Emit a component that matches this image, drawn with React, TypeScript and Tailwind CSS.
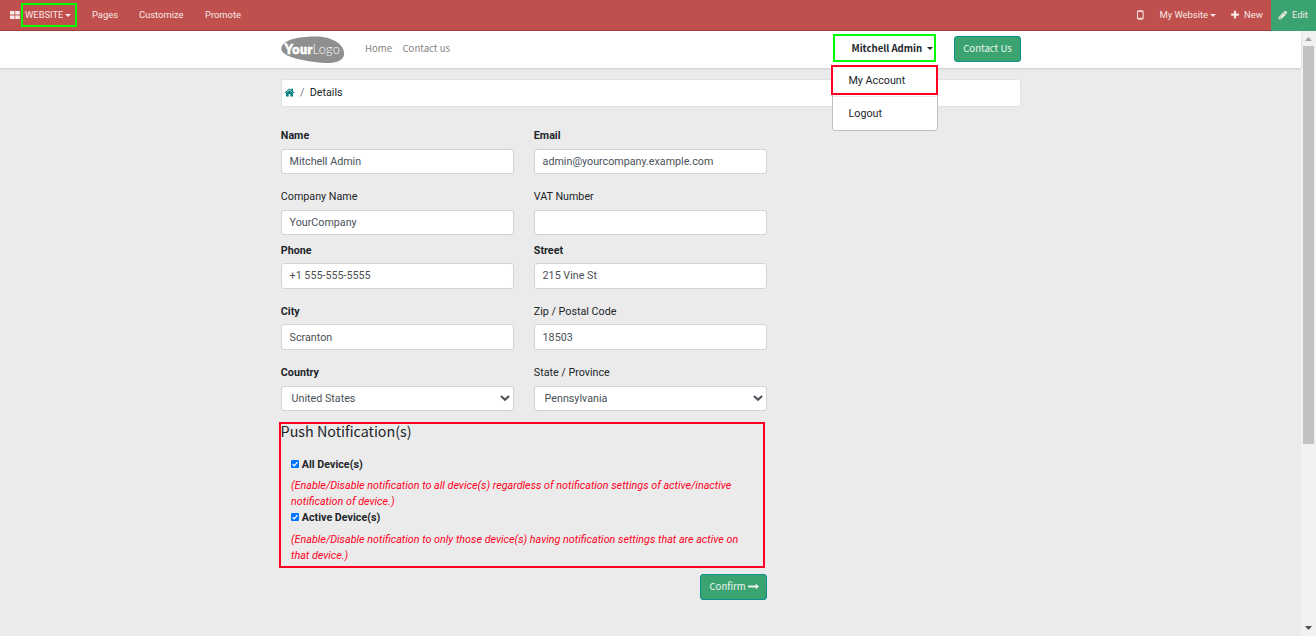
import React from "react";

const Fa = ({ d, className }: { d: string; className: string }) => (
  <svg viewBox="0 0 1792 1792" fill="currentColor" className={`shrink-0 ${className}`}>
    <path d={d} />
  </svg>
);

const HOME =
  "M1472 992v480q0 26-19 45t-45 19h-384v-384h-256v384h-384q-26 0-45-19t-19-45v-480q0-1 .5-3t.5-3l575-474 575 474q1 2 1 6zm223-69l-62 74q-8 9-21 11h-3q-13 0-21-7l-692-577-692 577q-12 8-24 7-13-2-21-11l-62-74q-8-10-7-23.5t11-21.5l719-599q32-26 76-26t76 26l244 204v-195q0-14 9-23t23-9h192q14 0 23 9t9 23v408l219 182q10 8 11 21.5t-7 23.5z";
const PENCIL =
  "M491 1536l91-91-235-235-91 91v107h128v128h107zm523-928q0-22-22-22-10 0-17 7l-542 542q-7 7-7 17 0 22 22 22 10 0 17-7l542-542q7-7 7-17zm-54-192l416 416-832 832h-416v-416zm683 96q0 53-37 90l-166 166-416-416 166-165q36-38 90-38 53 0 91 38l235 234q37 39 37 91z";
const PLUS =
  "M1600 736v192q0 40-28 68t-68 28h-416v416q0 40-28 68t-68 28h-192q-40 0-68-28t-28-68v-416h-416q-40 0-68-28t-28-68v-192q0-40 28-68t68-28h416v-416q0-40 28-68t68-28h192q40 0 68 28t28 68v416h416q40 0 68 28t28 68z";
const ARROW =
  "M1728 893q0 14-10 24l-384 354q-16 14-35 6-19-9-19-29v-224h-1248q-14 0-23-9t-9-23v-192q0-14 9-23t23-9h1248v-224q0-21 19-29t35 5l384 350q10 10 10 23z";

const Caret = ({ className = "" }: { className?: string }) => (
  <svg viewBox="0 0 6 3" className={`h-[3px] w-[6px] shrink-0 ${className}`} fill="currentColor">
    <path d="M0 0h6L3 3z" />
  </svg>
);

function TopBar() {
  return (
    <nav className="flex h-[31px] shrink-0 items-stretch border-b border-[#a83f3e] bg-[#c0504d] text-[9.4px] leading-none text-[#f8e9e8]">
      <div className="flex items-center pl-[10px]">
        <svg viewBox="0 0 10 8" className="h-2 w-[10px]" fill="currentColor">
          <path d="M0 0h4.5v3.5H0zM5.3 0h4.5v3.5H5.3zM0 4.4h4.5v3.5H0zM5.3 4.4h4.5v3.5H5.3z" />
        </svg>
      </div>
      <div className="mt-[3px] ml-px flex h-6 w-14 items-center border-2 border-[#00ff00] pl-[2px]">
        <span>WEBSITE</span>
        <Caret className="ml-[2px]" />
      </div>
      <span className="ml-[15px] flex w-[47px] items-center">Pages</span>
      <span className="flex w-[66px] items-center">Customize</span>
      <span className="flex items-center">Promote</span>
      <div className="ml-auto flex items-center">
        <svg viewBox="0 0 7 10" className="mr-[15px] h-[10px] w-[7px]" fill="none" stroke="currentColor">
          <rect x="0.5" y="0.8" width="5.6" height="8.4" rx="0.8" />
          <path d="M0.5 8.4h5.6M0.5 1.3h5.6" />
        </svg>
        <span className="flex items-center">
          My Website
          <Caret className="ml-[2px]" />
        </span>
        <Fa d={PLUS} className="ml-[14px] h-[10px] w-[10px]" />
        <span className="ml-1 w-[27px]">New</span>
      </div>
      <div className="-mb-px flex w-[45px] items-center bg-[#3ba36f] pb-px pl-[7px]">
        <Fa d={PENCIL} className="mb-px h-[10px] w-[10px]" />
        <span className="ml-1">Edit</span>
      </div>
    </nav>
  );
}

function Logo() {
  return (
    <svg viewBox="0 0 64 28" className="h-7 w-16">
      <path
        d="M0.3 12.5C1 4 17 0.5 34 0.5C51 0.5 63.3 8 63.1 18C62.8 25.5 53 27.5 44 27C27 26 0 21.5 0.3 12.5Z"
        fill="#8f8f8f"
      />
      <path d="M3.6 7.6h2.2" stroke="#fff" strokeWidth="1.6" />
      <text x="3.8" y="17.5" fontSize="12.4" fontWeight="800" fill="#fff" fontFamily="Lato, sans-serif" textLength="27.5" stroke="#fff" strokeWidth="0.5">
        Your
      </text>
      <text x="31.5" y="17.5" fontSize="12.8" fontWeight="300" fill="#fff" fontFamily="Lato, sans-serif" textLength="27.5">
        Logo
      </text>
    </svg>
  );
}

function SiteHeader() {
  return (
    <header className="relative z-10 flex h-[37px] shrink-0 bg-white pl-[281px] font-['Noto_Sans_CJK_SC',sans-serif] text-[9.6px] leading-none shadow-[0_1px_2px_rgba(0,0,0,0.14)]">
      <div className="mt-[5px] w-[84px]">
        <Logo />
      </div>
      <span className="mt-[13px] w-[37.5px] whitespace-nowrap text-[#848484]">Home</span>
      <span className="mt-[13px] w-[430.5px] whitespace-nowrap text-[#848484]">Contact us</span>
      <div className="relative mt-[3px] h-7 w-[103px] border-2 border-[#00ff00]">
        <div className="flex h-full items-center pl-[16.5px] font-bold whitespace-nowrap text-[#212529]">
          <span className="pt-[2px]">Mitchell Admin</span>
          <Caret className="ml-[4.5px]" />
        </div>
        <div className="absolute top-[29px] -left-[4px] w-[107px] font-[Roboto,sans-serif] text-[10.72px] text-[#212529]">
          <div className="ml-px rounded-b-[3px] border border-[#bfbfbf] bg-white">
            <div className="flex h-[31px] items-center border-b border-[#e9ecef] pl-[15.5px]">My Account</div>
            <div className="flex h-[33px] items-center pt-[2px] pl-[15.5px]">Logout</div>
          </div>
          <div className="absolute top-0 left-0 h-[30px] w-[107px] border-2 border-[#ff0022]" />
        </div>
      </div>
      <button className="mt-[5px] ml-[18px] h-[26px] w-[67px] rounded-[3px] border border-[#0c8f92] bg-[#3ba36f] whitespace-nowrap text-[#eef7f2]">
        Contact Us
      </button>
    </header>
  );
}

type FieldProps = { label: string; value: string; bold?: boolean; select?: boolean; box: string };

function Field({ label, value, bold, select, box }: FieldProps) {
  return (
    <div className="w-[233px]">
      <div className={`-ml-[0.2px] h-4 pt-px leading-4 text-[#212529] ${bold ? "font-bold" : ""}`}>{label}</div>
      <div
        className={`flex items-center justify-between rounded-[3px] border border-[#ced4da] bg-white leading-4 text-[#495057] ${box} ${select ? "pr-[3px] pl-[9.6px]" : "px-[7.6px]"}`}
      >
        <span>{value}</span>
        {select && (
          <svg viewBox="0 0 10 6" className="mb-[2px] h-[6px] w-[10px]" fill="none" stroke="#495057" strokeWidth="2">
            <path d="M1 1l4 3.8L9 1" />
          </svg>
        )}
      </div>
    </div>
  );
}

const rows: { gap: string; box: string; select?: boolean; fields: [string, string, boolean][] }[] = [
  { gap: "mt-5", box: "mt-[6px] h-[25px] pt-px", fields: [["Name", "Mitchell Admin", true], ["Email", "admin@yourcompany.example.com", true]] },
  { gap: "mt-[14px]", box: "mt-[6px] h-[25px] pt-px", fields: [["Company Name", "YourCompany", false], ["VAT Number", "", false]] },
  { gap: "mt-[7px]", box: "mt-[5px] h-[26px]", fields: [["Phone", "+1 555-555-5555", true], ["Street", "215 Vine St", true]] },
  { gap: "mt-[14px]", box: "mt-[5px] h-[26px] pt-[2px]", fields: [["City", "Scranton", true], ["Zip / Postal Code", "18503", false]] },
  { gap: "mt-[14px]", box: "mt-[6px] h-[25px] pt-px", select: true, fields: [["Country", "United States", true], ["State / Province", "Pennsylvania", false]] },
];

function Check({ label }: { label: string }) {
  return (
    <div className="flex h-4 items-center font-bold text-[#212529]">
      <svg viewBox="0 0 8 8" className="mr-[2.8px] h-2 w-2">
        <rect width="8" height="8" rx="1" fill="#0075ff" />
        <path d="M1.6 4.2l1.7 1.7 3.1-3.7" fill="none" stroke="#fff" strokeWidth="1.3" />
      </svg>
      <span className="pt-px leading-4">{label}</span>
    </div>
  );
}

function Notifications() {
  return (
    <section className="mt-[11px] -ml-[2px] h-[146px] w-[486px] border-2 border-[#ff0022]">
      <h3 className="-ml-[0.4px] h-[18px] font-['Noto_Sans_CJK_SC',sans-serif] text-[14.3px] leading-[13px] whitespace-nowrap text-[#212529]">
        Push Notification(s)
      </h3>
      <div className="mt-[14px] pl-[10px]">
        <Check label="All Device(s)" />
        <p className="mt-[6px] text-[10.77px] leading-4 text-[#ff0022] italic">
          (Enable/Disable notification to all device(s) regardless of notification settings of active/inactive
          <br />
          notification of device.)
        </p>
        <div className="-mt-px">
          <Check label="Active Device(s)" />
        </div>
        <p className="mt-[7px] text-[10.77px] leading-4 text-[#ff0022] italic">
          (Enable/Disable notification to only those device(s) having notification settings that are active on
          <br />
          that device.)
        </p>
      </div>
    </section>
  );
}

function Scrollbar() {
  return (
    <div className="flex w-[15px] shrink-0 flex-col items-center bg-[#f1f1f1]">
      <svg viewBox="0 0 15 15" className="h-[15px] w-[15px]">
        <path d="M4 10h7L7.5 6z" fill="#a3a3a3" />
      </svg>
      <div className="h-[398px] w-[11px] bg-[#c1c1c1]" />
      <svg viewBox="0 0 15 15" className="mt-auto h-[15px] w-[15px]">
        <path d="M4 5h7L7.5 9z" fill="#505050" />
      </svg>
    </div>
  );
}

export default function App() {
  return (
    <div className="flex h-[636px] w-[1316px] flex-col overflow-hidden bg-[#ebebeb] font-[Roboto,sans-serif] text-[10.72px]">
      <TopBar />
      <div className="flex min-h-0 flex-1">
        <div className="flex min-w-0 flex-1 flex-col">
          <SiteHeader />
          <main className="pl-[281px]">
            <div className="mt-[11px] flex h-7 w-[740px] items-center rounded-[3px] border border-[#dee2e6] bg-white pl-[2px] text-[#212529]">
              <Fa d={HOME} className="mb-[2px] h-[11px] w-[11px] text-[#087e80]" />
              <span className="mr-[5.3px] ml-[5px] text-[#6c757d]">/</span>
              <span>Details</span>
            </div>
            {rows.map((r) => (
              <div key={r.fields[0][0]} className={`flex gap-5 ${r.gap}`}>
                {r.fields.map(([label, value, bold]) => (
                  <Field key={label} label={label} value={value} bold={bold} select={r.select} box={r.box} />
                ))}
              </div>
            ))}
            <Notifications />
            <div className="mt-[6px] flex w-[486px] justify-end">
              <button className="flex h-[26px] w-[67px] items-center rounded-[3px] border border-[#0c8f92] bg-[#3ba36f] pb-px pl-[8.5px] font-['Noto_Sans_CJK_SC',sans-serif] text-[9.6px] text-[#eef7f2]">
                Confirm
                <Fa d={ARROW} className="ml-[2px] h-[11px] w-[11px] stroke-current stroke-[60]" />
              </button>
            </div>
          </main>
        </div>
        <Scrollbar />
      </div>
    </div>
  );
}
